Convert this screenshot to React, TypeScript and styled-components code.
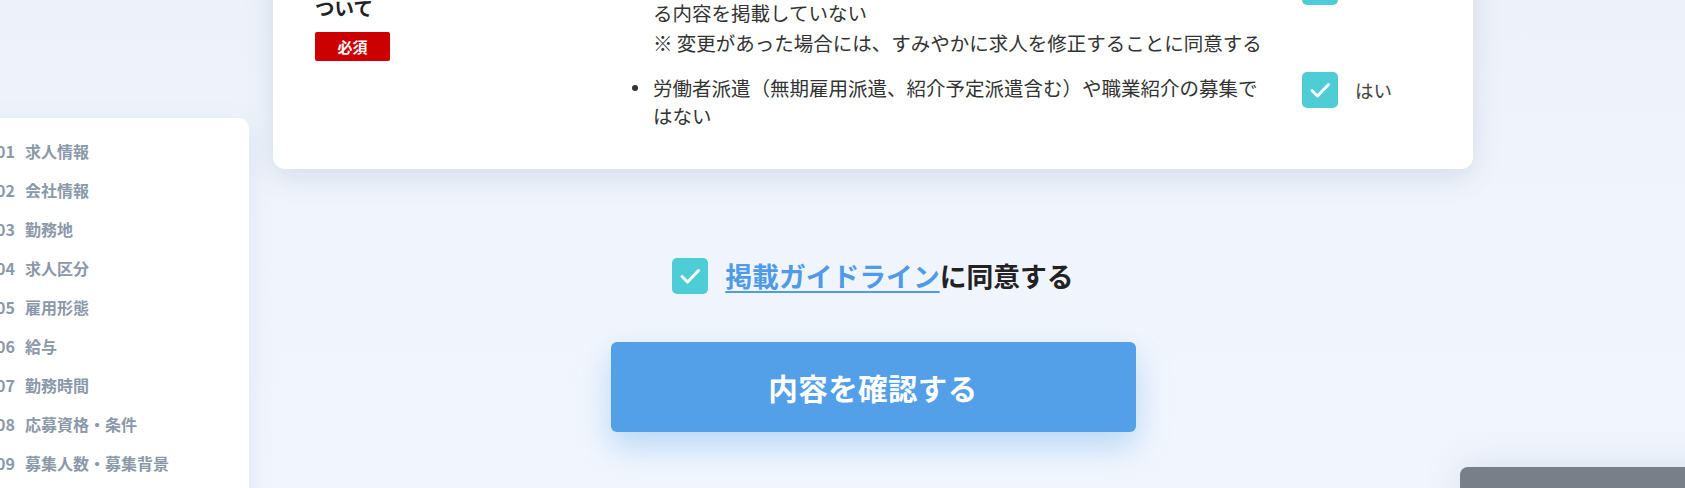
import React from "react";
import styled, { createGlobalStyle } from "styled-components";

const GlobalStyle = createGlobalStyle`
  html, body { margin: 0; padding: 0; }
  body {
    width: 1685px;
    height: 488px;
    overflow: hidden;
    background: #f0f5fd;
    font-family: "Noto Sans CJK JP", "Noto Sans", sans-serif;
    color: #333;
  }
`;

const Page = styled.div`
  position: relative;
  width: 1685px;
  height: 488px;
  overflow: hidden;
  background: linear-gradient(180deg, #edf2fa 0%, #f0f5fd 45%, #f1f6fe 100%);
`;

const Layout = styled.div`
  display: flex;
  align-items: flex-start;
  margin-top: -71px;
`;

const Sidebar = styled.nav`
  flex: 0 0 289px;
  box-sizing: border-box;
  margin-left: -40px;
  margin-top: 189px;
  padding: 13px 0 20px 36px;
  background: #fff;
  border-radius: 10px;
  box-shadow: 0 6px 30px rgba(30, 50, 90, 0.08);
`;

const NavItem = styled.div`
  display: flex;
  align-items: center;
  gap: 10px;
  height: 39px;
  font-size: 16px;
  font-weight: 700;
  color: #8b98a9;
  white-space: nowrap;
`;

const NavNum = styled.span`
  flex: 0 0 auto;
`;

const Main = styled.main`
  flex: 0 0 1200px;
  margin-left: 24px;
  display: flex;
  flex-direction: column;
  align-items: center;
`;

const Card = styled.section`
  width: 100%;
  box-sizing: border-box;
  background: #fff;
  border-radius: 12px;
  box-shadow: 0 8px 30px rgba(30, 50, 90, 0.12);
  padding: 40px 40px 39px 42px;
`;

const Section = styled.div`
  display: flex;
  align-items: flex-start;
`;

const LabelCol = styled.div`
  flex: 0 0 317px;
`;

const Title = styled.h3`
  margin: 0;
  font-size: 19.5px;
  line-height: 26px;
  font-weight: 700;
  color: #222;
`;

const Badge = styled.span`
  display: flex;
  align-items: center;
  justify-content: center;
  width: 75px;
  height: 29px;
  margin-top: 11px;
  background: #cc0000;
  color: #fff;
  font-size: 15px;
  font-weight: 700;
  border-radius: 2px;
`;

const Items = styled.ul`
  list-style: none;
  margin: 0;
  padding: 0;
  display: flex;
  flex-direction: column;
  gap: 15px;
`;

const Item = styled.li`
  display: flex;
  align-items: flex-start;
`;

const ItemText = styled.div`
  position: relative;
  flex: 0 0 636px;
  box-sizing: border-box;
  padding-left: 21px;
  margin-top: 2px;
  font-size: 19.5px;
  line-height: 28px;
  color: #333;

  &::before {
    content: "";
    position: absolute;
    left: 0;
    top: 11px;
    width: 6px;
    height: 6px;
    border-radius: 50%;
    background: #333;
  }
`;

const Note = styled.span`
  display: block;
  margin-top: 2px;
`;

const Answer = styled.label`
  display: flex;
  align-items: center;
  gap: 17px;
  margin-left: 34px;
  font-size: 18.5px;
  color: #444;
`;

const Check = styled.span`
  display: flex;
  align-items: center;
  justify-content: center;
  flex: 0 0 36px;
  width: 36px;
  height: 36px;
  border-radius: 5px;
  background: #4fcdd6;
`;

const AgreeRow = styled.div`
  display: flex;
  align-items: center;
  gap: 17px;
  margin-top: 89px;
`;

const AgreeText = styled.p`
  margin: 0;
  font-size: 26.8px;
  line-height: 36px;
  font-weight: 700;
  color: #222;
`;

const GuideLink = styled.a`
  color: #4f9be6;
  text-decoration: underline;
  text-decoration-thickness: 1.5px;
  text-underline-offset: 4px;
`;

const SubmitButton = styled.button`
  margin-top: 48px;
  width: 525px;
  height: 90px;
  border: none;
  border-radius: 6px;
  background: #54a0e8;
  color: #fff;
  font-family: inherit;
  font-size: 29.5px;
  font-weight: 700;
  letter-spacing: 0.4px;
  box-shadow: 0 14px 32px rgba(84, 160, 232, 0.36);
  cursor: pointer;
`;

const FloatPanel = styled.div`
  position: absolute;
  left: 1460px;
  top: 467px;
  width: 260px;
  height: 80px;
  background: #787f88;
  border-radius: 8px;
  box-shadow: 0 0 40px rgba(30, 50, 90, 0.12);
`;

const CheckMark = () => (
  <svg width="36" height="36" viewBox="0 0 36 36" aria-hidden="true">
    <polyline
      points="10,18.5 15.5,24 26.5,12.5"
      fill="none"
      stroke="#fff"
      strokeWidth="3"
      strokeLinecap="round"
      strokeLinejoin="round"
    />
  </svg>
);

const navItems = [
  ["01", "求人情報"],
  ["02", "会社情報"],
  ["03", "勤務地"],
  ["04", "求人区分"],
  ["05", "雇用形態"],
  ["06", "給与"],
  ["07", "勤務時間"],
  ["08", "応募資格・条件"],
  ["09", "募集人数・募集背景"],
  ["10", "仕事内容"],
];

export default function App() {
  return (
    <Page>
      <GlobalStyle />
      <Layout>
        <Sidebar>
          {navItems.map(([n, label]) => (
            <NavItem key={n}>
              <NavNum>{n}</NavNum>
              <span>{label}</span>
            </NavItem>
          ))}
        </Sidebar>
        <Main>
          <Card>
            <Section>
              <LabelCol>
                <Title>
                  掲載内容に
                  <br />
                  ついて
                </Title>
                <Badge>必須</Badge>
              </LabelCol>
              <Items>
                <Item>
                  <ItemText>
                    求人票に、実際の仕事内容や労働条件と異な
                    <br />
                    る内容を掲載していない
                    <Note>※ 変更があった場合には、すみやかに求人を修正することに同意する</Note>
                  </ItemText>
                  <Answer>
                    <Check>
                      <CheckMark />
                    </Check>
                    はい
                  </Answer>
                </Item>
                <Item>
                  <ItemText>
                    労働者派遣（無期雇用派遣、紹介予定派遣含む）や職業紹介の募集ではない
                  </ItemText>
                  <Answer>
                    <Check>
                      <CheckMark />
                    </Check>
                    はい
                  </Answer>
                </Item>
              </Items>
            </Section>
          </Card>
          <AgreeRow>
            <Check>
              <CheckMark />
            </Check>
            <AgreeText>
              <GuideLink href="#">掲載ガイドライン</GuideLink>に同意する
            </AgreeText>
          </AgreeRow>
          <SubmitButton type="button">内容を確認する</SubmitButton>
        </Main>
      </Layout>
      <FloatPanel />
    </Page>
  );
}
